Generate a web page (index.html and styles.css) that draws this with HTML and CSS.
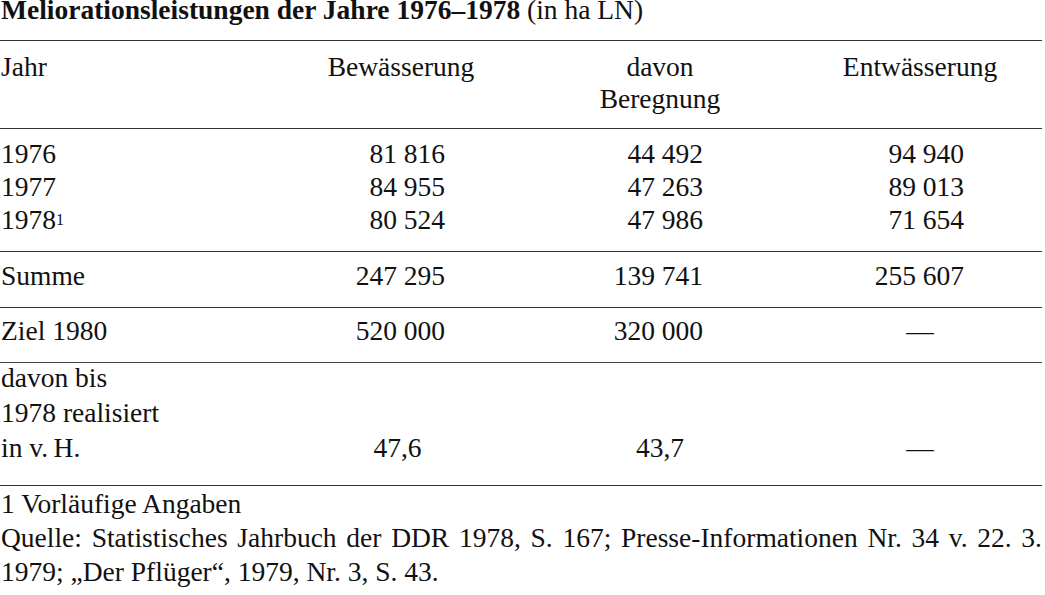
FILE: index.html
```html
<!DOCTYPE html>
<html lang="de">
<head>
<meta charset="utf-8">
<title>Meliorationsleistungen der Jahre 1976–1978</title>
<link rel="stylesheet" href="styles.css">
</head>
<body>
<div class="page">
  <h1 class="title"><strong>Meliorationsleistungen der Jahre 1976–1978</strong> (in ha LN)</h1>
  <table class="stats">
    <colgroup>
      <col class="c1"><col class="c2"><col class="c3"><col class="c4">
    </colgroup>
    <thead>
      <tr class="head">
        <th class="lbl">Jahr</th>
        <th>Bewässerung</th>
        <th>davon<br>Beregnung</th>
        <th>Entwässerung</th>
      </tr>
    </thead>
    <tbody>
      <tr class="r-first">
        <td class="lbl">1976</td>
        <td class="n2">81 816</td>
        <td class="n3">44 492</td>
        <td class="n4">94 940</td>
      </tr>
      <tr>
        <td class="lbl">1977</td>
        <td class="n2">84 955</td>
        <td class="n3">47 263</td>
        <td class="n4">89 013</td>
      </tr>
      <tr class="r-last">
        <td class="lbl">1978<sup class="fn">1</sup></td>
        <td class="n2">80 524</td>
        <td class="n3">47 986</td>
        <td class="n4">71 654</td>
      </tr>
      <tr class="r-sum">
        <td class="lbl">Summe</td>
        <td class="n2">247 295</td>
        <td class="n3">139 741</td>
        <td class="n4">255 607</td>
      </tr>
      <tr class="r-goal">
        <td class="lbl">Ziel 1980</td>
        <td class="n2">520 000</td>
        <td class="n3">320 000</td>
        <td class="ctr">—</td>
      </tr>
      <tr class="r-pct">
        <td class="lbl"><div class="multi">davon bis<br>1978 realisiert<br>in v.&#8201;H.</div></td>
        <td class="ctr p2">47,6</td>
        <td class="ctr">43,7</td>
        <td class="ctr">—</td>
      </tr>
    </tbody>
  </table>
  <div class="notes">
    <p class="note">1 Vorläufige Angaben</p>
    <p class="note src">Quelle: Statistisches Jahrbuch der DDR 1978, S. 167; Presse-Informationen Nr. 34 v. 22. 3. 1979; „Der Pflüger“, 1979, Nr. 3, S. 43.</p>
  </div>
</div>
</body>
</html>
```

FILE: styles.css
```css
html, body {
  margin: 0;
  padding: 0;
  background: #ffffff;
}

body {
  font-family: "Liberation Serif", "Times New Roman", serif;
  font-size: 27.5px;
  color: #111111;
}

.page {
  width: 1042px;
}

.title {
  margin: 0 0 20px 0;
  padding-left: 1px;
  font-size: 27.5px;
  font-weight: normal;
  line-height: 20px;
  white-space: nowrap;
}

.title strong {
  font-weight: bold;
}

.stats {
  width: 1042px;
  table-layout: fixed;
  border-collapse: separate;
  border-spacing: 0;
}

.c1 { width: 280px; }
.c2 { width: 242px; }
.c3 { width: 276px; }
.c4 { width: 244px; }

.stats th,
.stats td {
  padding: 0;
  font-weight: normal;
  white-space: nowrap;
  line-height: 33px;
}

.stats .lbl {
  text-align: left;
  padding-left: 1px;
}

.head th {
  border-top: 1px solid #333333;
  border-bottom: 1px solid #333333;
  padding-top: 10px;
  padding-bottom: 13px;
  line-height: 32px;
  text-align: center;
  vertical-align: top;
}

.n2 { text-align: right; padding-right: 77px !important; }
.n3 { text-align: right; padding-right: 95px !important; }
.n4 { text-align: right; padding-right: 78px !important; }
.ctr { text-align: center; }
.p2 { padding-right: 7px !important; }

.r-first td { padding-top: 8px; }

.r-last td {
  padding-bottom: 15px;
  border-bottom: 1px solid #333333;
}

.r-sum td {
  padding-top: 7px;
  padding-bottom: 15px;
  border-bottom: 1px solid #333333;
}

.r-goal td {
  padding-top: 6px;
  padding-bottom: 15px;
  border-bottom: 1px solid #444444;
}

.r-pct td {
  line-height: 35px;
  padding-bottom: 20px;
  border-bottom: 1px solid #333333;
  vertical-align: bottom;
}

.multi {
  margin-top: -3px;
}

.fn {
  font-size: 16px;
  line-height: 0;
  vertical-align: 4px;
}

.notes {
  padding-top: 1px;
  padding-left: 1px;
}

.note {
  margin: 0;
  line-height: 34px;
}

.src {
  text-align: justify;
}
```
